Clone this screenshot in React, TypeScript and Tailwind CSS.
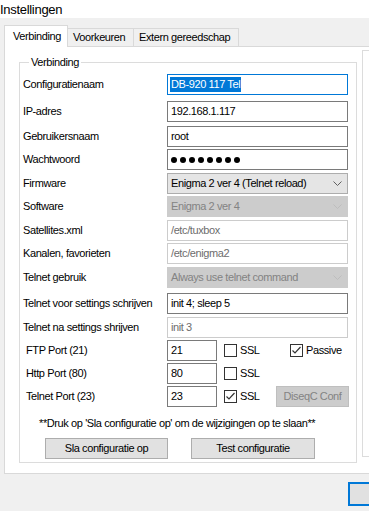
import React from "react"

function Chevron({ color = "#606060" }: { color?: string }) {
  return (
    <svg width="9" height="6" viewBox="0 0 9 6" className="shrink-0">
      <polyline points="0.5,0.5 4.5,4.5 8.5,0.5" fill="none" stroke={color} strokeWidth="1" />
    </svg>
  )
}

function CheckBox({ checked }: { checked?: boolean }) {
  return (
    <div className="w-[13px] h-[13px] border border-[#333333] bg-white flex items-center justify-center shrink-0">
      {checked && (
        <svg width="11" height="11" viewBox="0 0 11 11">
          <polyline points="1.5,5.5 4,8 9.5,2" fill="none" stroke="#333333" strokeWidth="1.2" />
        </svg>
      )}
    </div>
  )
}

function TextBox({ value, disabled }: { value: string; disabled?: boolean }) {
  return (
    <div
      className={
        disabled
          ? "w-[181px] h-[21px] border border-[#cccccc] bg-white text-[#6d6d6d] flex items-center pl-[3px]"
          : "w-[181px] h-[21px] border border-[#7a7a7a] bg-white flex items-center pl-[3px]"
      }
    >
      {value}
    </div>
  )
}

function Combo({ value, disabled }: { value: string; disabled?: boolean }) {
  return (
    <div
      className={
        disabled
          ? "w-[181px] h-[21px] border border-[#cccccc] bg-[#cccccc] text-[#838383] flex items-center justify-between pl-[3px] pr-[5px]"
          : "w-[181px] h-[21px] border border-[#adadad] bg-[#e5e5e5] flex items-center justify-between pl-[3px] pr-[5px]"
      }
    >
      <span>{value}</span>
      <Chevron color={disabled ? "#bdbdbd" : "#606060"} />
    </div>
  )
}

function Row({ label, className, children }: { label: string; className: string; children: React.ReactNode }) {
  return (
    <div className={"flex items-center h-[21px] " + className}>
      <div className="w-[144px] shrink-0">{label}</div>
      {children}
    </div>
  )
}

function PortRow({ label, value, className, children }: { label: string; value: string; className: string; children?: React.ReactNode }) {
  return (
    <div className={"flex items-center h-[21px] " + className}>
      <div className="w-[144px] shrink-0 pl-[3px]">{label}</div>
      <div className="w-[50px] h-[21px] border border-[#7a7a7a] bg-white flex items-center pl-[3px]">{value}</div>
      {children}
    </div>
  )
}

export default function App() {
  return (
    <div className="w-[369px] h-[511px] overflow-hidden bg-[#f0f0f0] text-[11px] text-black tracking-[-0.4px] font-['Liberation_Sans',Arial,sans-serif] leading-none">
      <div className="h-[18px] bg-white flex items-center text-[13px] tracking-[-0.3px]">Instellingen</div>

      <div className="pl-[4px] pt-[7px]">
        <div className="flex items-end h-[21px]">
          <div className="h-[22px] w-[64px] border border-b-0 border-[#d9d9d9] bg-white flex items-center pl-[8px] relative z-10 -mb-[1px]">
            Verbinding
          </div>
          <div className="h-[18px] w-[66px] border border-l-0 border-b-0 border-[#d9d9d9] bg-[#f0f0f0] flex items-center pl-[5px]">
            Voorkeuren
          </div>
          <div className="h-[18px] w-[105px] border border-l-0 border-b-0 border-[#d9d9d9] bg-[#f0f0f0] flex items-center pl-[5px]">
            Extern gereedschap
          </div>
        </div>

        <div className="w-[420px] h-[428px] border border-[#d9d9d9] bg-white flex items-start pl-[14px] pt-[9px] gap-[5px]">
          <fieldset className="w-[338px] h-[407px] border border-[#dcdcdc] pl-[3px] pr-[0px]">
            <legend className="ml-[6px] px-[2px] h-[13px] leading-[13px]">Verbinding</legend>

            <Row label="Configuratienaam" className="mt-[5px]">
              <div className="w-[181px] h-[21px] border border-[#0078d7] bg-white flex items-center pl-[2px]">
                <span className="bg-[#0078d7] text-white h-[15px] flex items-center px-[1px]">DB-920 117 Tel</span>
              </div>
            </Row>
            <Row label="IP-adres" className="mt-[6px]">
              <TextBox value="192.168.1.117" />
            </Row>
            <Row label="Gebruikersnaam" className="mt-[4px]">
              <TextBox value="root" />
            </Row>
            <Row label="Wachtwoord" className="mt-[2px]">
              <div className="w-[181px] h-[21px] border border-[#7a7a7a] bg-white flex items-center pl-[3px] gap-[3px]">
                {[0, 1, 2, 3, 4, 5, 6, 7].map((i) => (
                  <div key={i} className="w-[6px] h-[6px] rounded-full bg-black" />
                ))}
              </div>
            </Row>
            <Row label="Firmware" className="mt-[3px]">
              <Combo value="Enigma 2 ver 4 (Telnet reload)" />
            </Row>
            <Row label="Software" className="mt-[2px]">
              <Combo value="Enigma 2 ver 4" disabled />
            </Row>
            <Row label="Satellites.xml" className="mt-[3px]">
              <TextBox value="/etc/tuxbox" disabled />
            </Row>
            <Row label="Kanalen, favorieten" className="mt-[2px]">
              <TextBox value="/etc/enigma2" disabled />
            </Row>
            <Row label="Telnet gebruik" className="mt-[3px]">
              <Combo value="Always use telnet command" disabled />
            </Row>
            <Row label="Telnet voor settings schrijven" className="mt-[5px]">
              <TextBox value="init 4; sleep 5" />
            </Row>
            <Row label="Telnet na settings shrijven" className="mt-[3px]">
              <TextBox value="init 3" disabled />
            </Row>

            <PortRow label="FTP Port (21)" value="21" className="mt-[2px]">
              <div className="w-[66px] ml-[7px] flex items-center gap-[3px]">
                <CheckBox />
                <span>SSL</span>
              </div>
              <div className="flex items-center gap-[3px]">
                <CheckBox checked />
                <span>Passive</span>
              </div>
            </PortRow>
            <PortRow label="Http Port (80)" value="80" className="mt-[2px]">
              <div className="ml-[7px] flex items-center gap-[3px]">
                <CheckBox />
                <span>SSL</span>
              </div>
            </PortRow>
            <PortRow label="Telnet Port (23)" value="23" className="mt-[2px]">
              <div className="w-[52px] ml-[7px] flex items-center gap-[3px]">
                <CheckBox checked />
                <span>SSL</span>
              </div>
              <div className="w-[73px] h-[21px] border border-[#bfbfbf] bg-[#cccccc] text-[#838383] flex items-center justify-center">
                DiseqC Conf
              </div>
            </PortRow>

            <div className="mt-[10px] h-[13px] flex items-center pl-[16px]">
              **Druk op 'Sla configuratie op' om de wijzigingen op te slaan**
            </div>

            <div className="mt-[8px] flex gap-[23px] pl-[22px]">
              <div className="w-[123px] h-[21px] border border-[#adadad] bg-[#e1e1e1] flex items-center justify-center">
                Sla configuratie op
              </div>
              <div className="w-[124px] h-[21px] border border-[#adadad] bg-[#e1e1e1] flex items-center justify-center">
                Test configuratie
              </div>
            </div>
          </fieldset>

          <fieldset className="w-[60px] h-[407px] border border-[#dcdcdc] -mt-[6px]"></fieldset>
        </div>
      </div>

      <div className="pl-[348px] pt-[8px]">
        <div className="w-[75px] h-[24px] border-2 border-[#0078d7] bg-[#e1e1e1]" />
      </div>
    </div>
  )
}
